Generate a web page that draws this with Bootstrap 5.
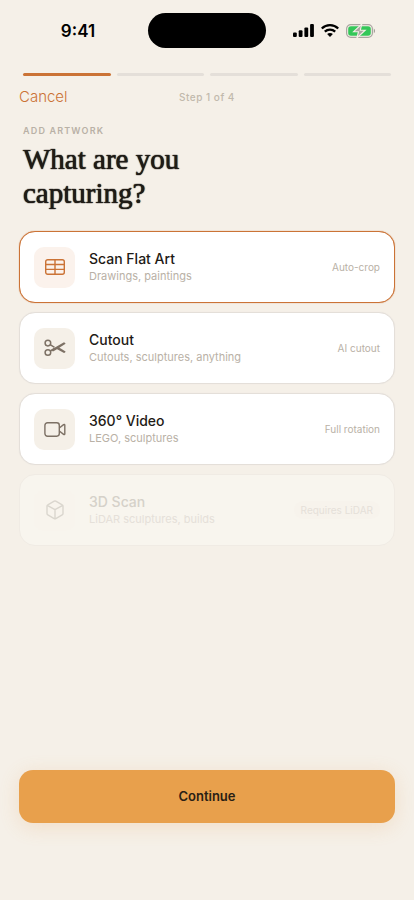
<!DOCTYPE html>
<html lang="en">
<head>
<meta charset="utf-8">
<meta name="viewport" content="width=device-width, initial-scale=1">
<title>Add artwork</title>
<link href="https://cdn.jsdelivr.net/npm/bootstrap@5.3.0/dist/css/bootstrap.min.css" rel="stylesheet">
<style>
  :root { --paper: #f5f0e8; --ink: #1f1b16; --clay: #cb7336; --muted: #b9b1a6; --line: #e4dfd9; }
  body { background: var(--paper); color: var(--ink); font-family: Inter, "Liberation Sans", sans-serif; }
  .gutter { padding-left: 19px; padding-right: 19px; }
  .gutter-inner { padding-left: 23px; padding-right: 23px; }
  .status { height: 48px; padding-top: 13px; }
  .status-time { font-size: 17px; line-height: 37px; padding-left: 8px; color: #000; }
  .status-icons { gap: 7px; padding-right: 12px; }
  .island { width: 118px; height: 35px; background: #000; }
  .steps { gap: 6px; margin-top: 25px; }
  .step-bar { height: 3px; background: var(--line); }
  .step-bar.current { background: var(--clay); }
  .top-row { margin-top: 10px; }
  .cancel { color: var(--clay); font-size: 15px; line-height: 22px; font-weight: 300; }
  .cancel:hover { color: var(--ink); }
  .step-count { color: #c1b9ac; font-size: 10px; letter-spacing: .05em; }
  .eyebrow { color: var(--muted); font-size: 9px; line-height: 12px; letter-spacing: .13em; margin-top: 17px; }
  .headline { font-family: "Liberation Serif", serif; font-size: 29px; line-height: 34px; font-weight: 400; text-shadow: 0 0 1px var(--ink), 0 0 1px var(--ink); max-width: 240px; margin: 5px 0 21px; }
  .choices { gap: 9px; }
  .choice { min-height: 72px; padding: 14px; gap: 14px; background: #fff; border: 1px solid var(--line); border-radius: 16px; cursor: pointer; box-shadow: 0 0 1px var(--line); }
  .btn-check:checked + .choice { border-color: var(--clay); box-shadow: 0 0 1px var(--clay); }
  .btn-check:disabled + .choice { background: #f8f5ee; border-color: #f0ebe4; box-shadow: none; cursor: default; }
  .btn-check:focus-visible + .choice { outline: 2px solid var(--clay); }
  .choice-icon { width: 41px; height: 41px; border-radius: 10px; background: var(--paper); color: #7d7165; }
  .btn-check:checked + .choice .choice-icon { background: #fbf2ec; color: var(--clay); }
  .btn-check:disabled + .choice .choice-icon { background: #f8f4ed; color: #dad6ce; }
  .choice-name { font-size: 14px; line-height: 18px; }
  .choice-info { font-size: 11px; line-height: 16px; color: var(--muted); }
  .choice-tag { font-size: 10px; line-height: 14px; color: var(--muted); }
  .btn-check:disabled + .choice .choice-name { color: #d5d1c9; }
  .btn-check:disabled + .choice .choice-info { color: #e5e0d9; }
  .btn-check:disabled + .choice .choice-tag { color: #e5e0d9; background: #f7f3ec; padding: 2px 7px; }
  .continue { background: #e8a04c; color: #2a2014; font-size: 13px; line-height: 21px; padding: 16px; border: 0; border-radius: 14px; box-shadow: 0 4px 20px rgba(232, 150, 70, .2); }
  .continue:hover { background: #df9540; color: #2a2014; }
  .page-foot { padding-bottom: 77px; }
</style>
</head>
<body>
<div class="d-flex flex-column min-vh-100">
  <header>
    <div class="status d-flex">
      <div class="status-time flex-fill text-center fw-semibold w-25">9:41</div>
      <div class="island rounded-pill flex-shrink-0"></div>
      <div class="status-icons flex-fill d-flex align-items-center justify-content-center w-25">
        <svg width="21" height="13" viewBox="0 0 21 13" aria-label="Signal" role="img"><rect x="0" y="8.5" width="3.8" height="4.5" rx="1.1"/><rect x="5.7" y="6.2" width="3.8" height="6.8" rx="1.1"/><rect x="11.4" y="3.4" width="3.8" height="9.6" rx="1.1"/><rect x="17.1" y="0" width="3.8" height="13" rx="1.1"/></svg>
        <svg width="18" height="13" viewBox="0 0 18 13" fill="none" stroke="#000" stroke-width="2.3" aria-label="Wi-Fi" role="img"><path d="M.8 4.5C5.4.1 12.6.1 17.2 4.5"/><path d="M3.8 7.7C6.8 4.9 11.2 4.9 14.2 7.7"/><path d="M9 13L6.1 10C7.7 8.5 10.3 8.5 11.9 10Z" fill="#000" stroke="none"/></svg>
        <svg width="30" height="14" viewBox="0 0 30 14" aria-label="Battery charging" role="img"><rect x=".6" y=".6" width="25.8" height="12.8" rx="4.2" fill="none" stroke="#aaa6a1" stroke-width="1.2"/><rect x="2.2" y="2.2" width="22.6" height="9.6" rx="2.8" fill="#34c759"/><path d="M27.8 4.6c1.6.8 1.6 4 0 4.8z" fill="#9b9792"/><path d="M15.800 0L7.600 7.700h4.900L10.900 14 19.200 6.200h-4.900z" fill="#aaa6a1" stroke="#f5f0e8" stroke-width="1.1"/></svg>
      </div>
    </div>
    <div class="steps gutter-inner d-flex" role="progressbar" aria-label="Step 1 of 4" aria-valuemin="0" aria-valuemax="4" aria-valuenow="1">
      <div class="step-bar current flex-fill rounded-pill"></div>
      <div class="step-bar flex-fill rounded-pill"></div>
      <div class="step-bar flex-fill rounded-pill"></div>
      <div class="step-bar flex-fill rounded-pill"></div>
    </div>
    <div class="top-row gutter row gx-0 align-items-center">
      <div class="col d-flex"><button type="button" class="cancel btn p-0 border-0">Cancel</button></div>
      <div class="step-count col-auto fw-medium">Step 1 of 4</div>
      <div class="col"></div>
    </div>
  </header>

  <main class="flex-grow-1">
    <div class="gutter-inner">
      <p class="eyebrow fw-semibold text-uppercase mb-0">Add artwork</p>
      <h1 class="headline">What are you capturing?</h1>
    </div>
    <div class="choices gutter d-flex flex-column" role="radiogroup" aria-label="What are you capturing?">
      <div class="position-relative">
        <input class="btn-check" type="radio" name="kind" id="kind-flat" checked>
        <label class="choice d-flex align-items-center" for="kind-flat">
          <span class="choice-icon d-flex align-items-center justify-content-center flex-shrink-0">
            <svg width="20" height="16" viewBox="0 0 20 16" fill="none" stroke="currentColor" stroke-width="1.4"><rect x=".7" y=".7" width="18.6" height="14.6" rx="2"/><path d="M.7 5.5h18.6M.7 10.4h18.6M10 .7v14.6"/></svg>
          </span>
          <span class="flex-grow-1"><span class="choice-name d-block fw-medium">Scan Flat Art</span><span class="choice-info d-block">Drawings, paintings</span></span>
          <span class="choice-tag">Auto-crop</span>
        </label>
      </div>
      <div class="position-relative">
        <input class="btn-check" type="radio" name="kind" id="kind-cutout">
        <label class="choice d-flex align-items-center" for="kind-cutout">
          <span class="choice-icon d-flex align-items-center justify-content-center flex-shrink-0">
            <svg width="22" height="18" viewBox="0 0 22 18" fill="none" stroke="currentColor" stroke-width="1.5"><circle cx="3.9" cy="4.1" r="2.8"/><circle cx="3.9" cy="13.5" r="2.8"/><path d="M6.2 5.7l4.3 2.6M6.300 12l4.200-2.700"/><path d="M9.600 9.200L20 3.200c.9.500 1.400.9 1.600 1.600l-9.900 6.100-2.700 1.500-1.500-.8zM11.300 7.900l2.200-.5 8.100 5c-.2.700-.7 1.100-1.600 1.600l-8.700-4.700z" fill="currentColor" stroke="none"/></svg>
          </span>
          <span class="flex-grow-1"><span class="choice-name d-block fw-medium">Cutout</span><span class="choice-info d-block">Cutouts, sculptures, anything</span></span>
          <span class="choice-tag">AI cutout</span>
        </label>
      </div>
      <div class="position-relative">
        <input class="btn-check" type="radio" name="kind" id="kind-video">
        <label class="choice d-flex align-items-center" for="kind-video">
          <span class="choice-icon d-flex align-items-center justify-content-center flex-shrink-0">
            <svg width="22" height="15" viewBox="0 0 22 15" fill="none" stroke="currentColor" stroke-width="1.4" stroke-linejoin="round"><rect x=".9" y=".8" width="14.4" height="13.4" rx="2.6"/><path d="M15.300 6l4.300-3.400c.6-.4 1.200-.2 1.200.5v8.800c0 .7-.6.9-1.200.5l-4.300-3.400"/></svg>
          </span>
          <span class="flex-grow-1"><span class="choice-name d-block fw-medium">360° Video</span><span class="choice-info d-block">LEGO, sculptures</span></span>
          <span class="choice-tag">Full rotation</span>
        </label>
      </div>
      <div class="position-relative">
        <input class="btn-check" type="radio" name="kind" id="kind-scan" disabled>
        <label class="choice d-flex align-items-center" for="kind-scan">
          <span class="choice-icon d-flex align-items-center justify-content-center flex-shrink-0">
            <svg width="18" height="20" viewBox="0 0 18 20" fill="none" stroke="currentColor" stroke-width="1.4" stroke-linejoin="round"><path d="M8.2 1.2q.8-.4 1.6 0l6.4 3.6q.8.4.8 1.3v7.5q0 .9-.8 1.3l-6.4 3.7q-.8.4-1.6 0L1.8 14.9Q1 14.5 1 13.6V6.100q0-.9.800-1.300zM1.300 5.300L9 9.700l7.700-4.400M9 9.700v9"/></svg>
          </span>
          <span class="flex-grow-1"><span class="choice-name d-block fw-medium">3D Scan</span><span class="choice-info d-block">LiDAR sculptures, builds</span></span>
          <span class="choice-tag rounded-pill">Requires LiDAR</span>
        </label>
      </div>
    </div>
  </main>

  <footer class="page-foot gutter pt-4">
    <button type="button" class="continue btn w-100 fw-semibold">Continue</button>
  </footer>
</div>
<script src="https://cdn.jsdelivr.net/npm/bootstrap@5.3.0/dist/js/bootstrap.bundle.min.js"></script>
</body>
</html>
